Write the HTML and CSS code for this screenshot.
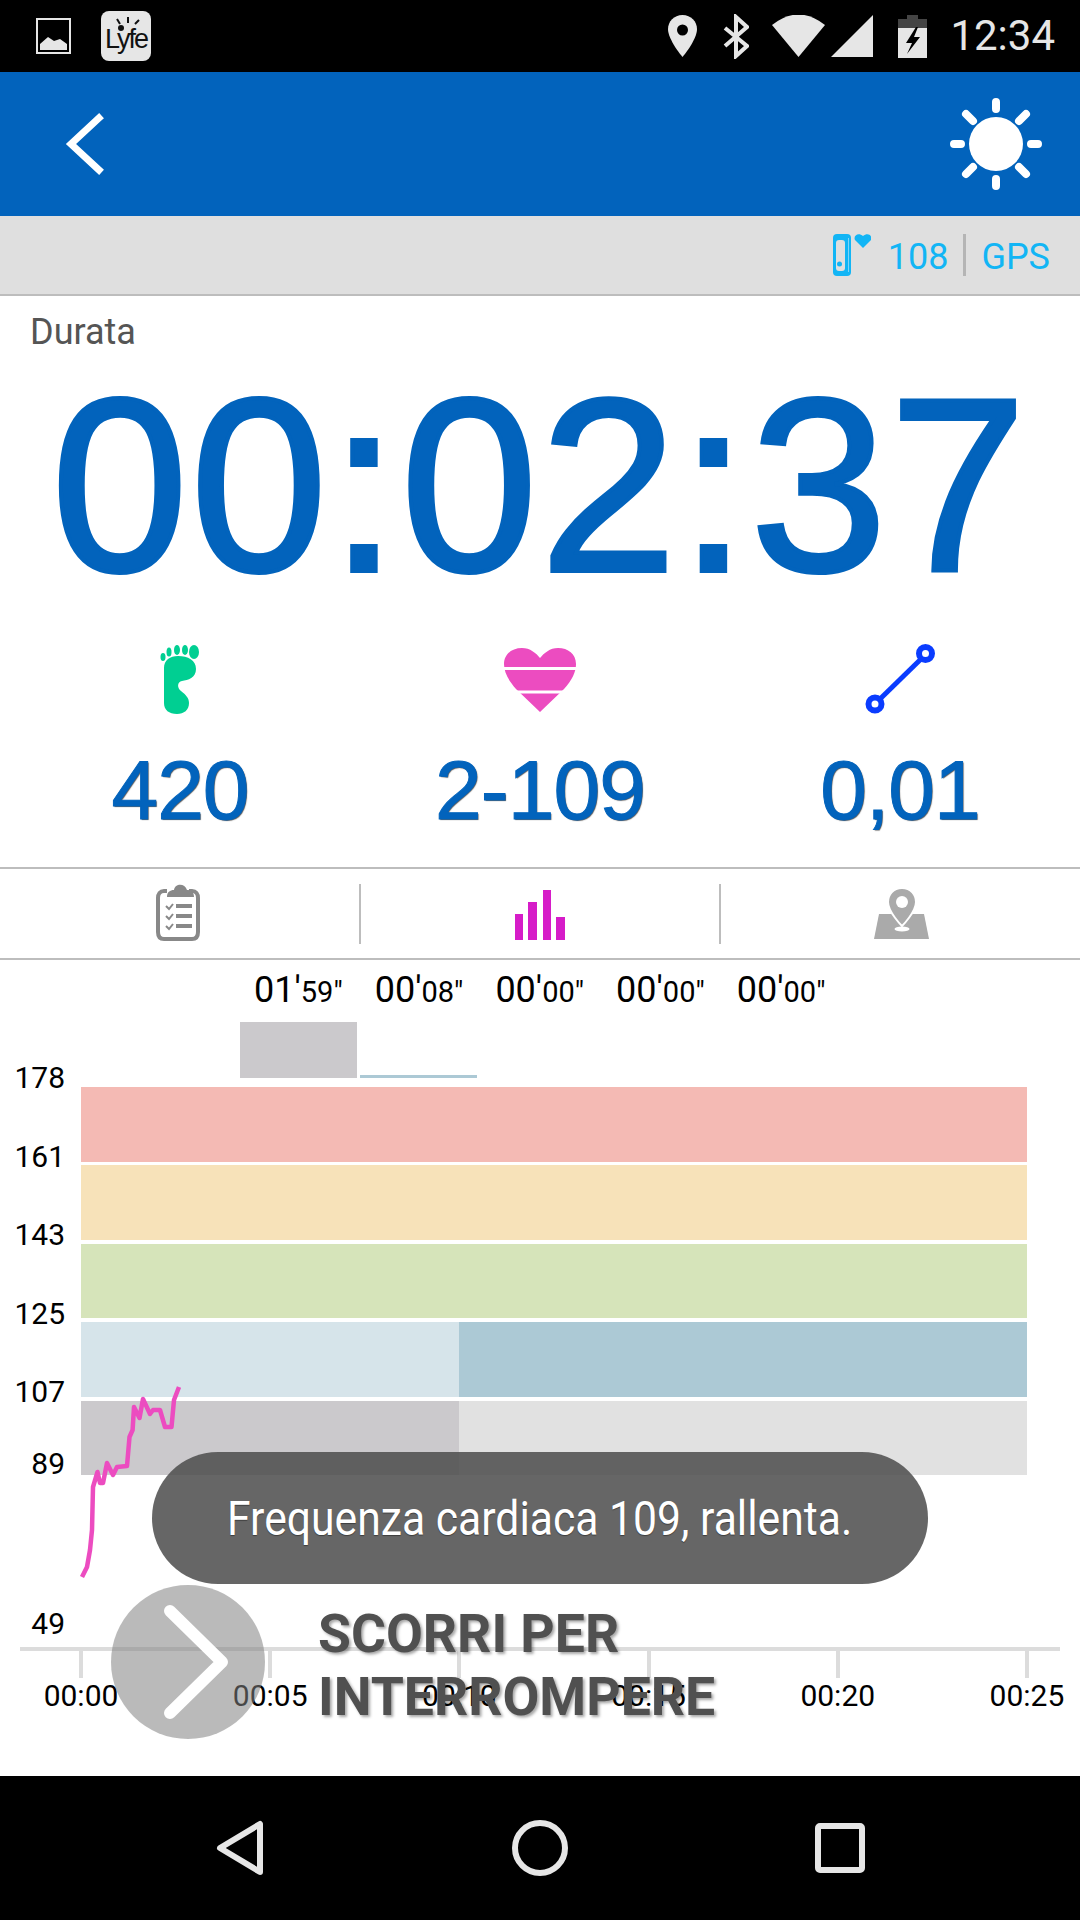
FILE: index.html
```html
<!DOCTYPE html>
<html>
<head>
    <title>Durata</title>
    <link rel="stylesheet" href="styles.css">
</head>
<body>
    <div class="status-bar">
        <svg class="ic-image" viewBox="36 18 35 36"><rect x="37" y="19" width="33" height="34" fill="none" stroke="#e6e6e6" stroke-width="2"/><path d="M40 50V44L48 37L54 41L60 39L67 44V50Z" fill="#e6e6e6"/></svg>
        <div class="life-logo">
            <svg class="life-rays" viewBox="0 0 50 20"><path d="M27 2V8M16 4L19 9M38 5L34 9" stroke="#111" stroke-width="2"/><circle cx="20" cy="13" r="3" fill="#111"/></svg>
            Lyfe
        </div>
        <div class="status-spacer"></div>
        <svg class="ic-pin" viewBox="669 15 29 42"><path d="M683.500 15C675 15 669 21.500 669 29C669 40 683.500 57 683.500 57C683.500 57 698 40 698 29C698 21.500 692 15 683.500 15Z" fill="#e6e6e6"/><circle cx="683.500" cy="30" r="5.500" fill="#000"/></svg>
        <svg class="ic-bt" viewBox="724 14 26 45"><path d="M726 28L748 46L737 56V17L748 27L726 46" fill="none" stroke="#e6e6e6" stroke-width="4"/></svg>
        <svg class="ic-wifi" viewBox="773 14 53 42"><path d="M773 24Q799.500 3 826 24L799.500 56Z" fill="#e6e6e6"/></svg>
        <svg class="ic-signal" viewBox="832 15 42 42"><path d="M832 57L874 15V57Z" fill="#e6e6e6"/></svg>
        <svg class="ic-battery" viewBox="899 14 29 43"><path d="M908 14H919V18H928V27H899V18H908Z" fill="#444"/><path d="M899 27H928V57H899Z" fill="#e6e6e6"/><path d="M917 26L907 42H913L908 53L921 36H915L919 26Z" fill="#000"/></svg>
        <span class="clock">12:34</span>
    </div>

    <div class="app-bar">
        <svg class="ic-back" viewBox="60 108 50 72"><path d="M99 118L71 144L99 170" fill="none" stroke="#fff" stroke-width="7" stroke-linecap="square"/></svg>
        <svg class="ic-sun" viewBox="948 96 96 96">
            <circle cx="996" cy="144" r="27" fill="#fff"/>
            <path d="M996 102V109M996 179V186M954 144H961M1031 144H1038M966 114L973 121M1026 114L1019 121M966 174L973 167M1026 174L1019 167" stroke="#fff" stroke-width="8" stroke-linecap="round"/>
        </svg>
    </div>

    <div class="sensor-bar">
        <svg class="ic-device" viewBox="835 234 38 42">
            <rect x="835" y="234" width="18" height="42" rx="4" fill="#12b5f5"/>
            <rect x="838" y="240" width="9" height="31" rx="3" fill="#dfdfdf"/>
            <rect x="850" y="238" width="1" height="34" fill="#7fd4f7"/>
            <circle cx="841.500" cy="264" r="2.500" fill="#12b5f5"/>
            <path d="M865 248L857 240C855 236 860 232 865 236C870 232 875 236 873 240Z" fill="#12b5f5"/>
        </svg>
        <span class="sensor-text">108</span>
        <span class="sensor-sep"></span>
        <span class="sensor-text">GPS</span>
    </div>

    <div class="duration-label">Durata</div>
    <div class="timer">00:02:37</div>

    <div class="stats">
        <div class="stat">
            <svg class="stat-icon" viewBox="150 644 60 71">
                <path d="M164 668C164 660 170 656 178 656C188 656 196 660 196 669C196 678 188 680 182 681C177 682 177 688 181 691C186 695 189 698 189 703C189 710 184 714 177 714C169 714 164 710 164 703Z" fill="#00cf92"/>
                <ellipse cx="163" cy="657" rx="2.500" ry="4" fill="#00cf92"/>
                <ellipse cx="169" cy="652" rx="2.500" ry="4.500" fill="#00cf92"/>
                <ellipse cx="177" cy="650" rx="3" ry="5" fill="#00cf92"/>
                <ellipse cx="185" cy="650" rx="3" ry="5" fill="#00cf92"/>
                <ellipse cx="194" cy="652" rx="5" ry="7" fill="#00cf92"/>
            </svg>
            <div class="stat-value">420</div>
        </div>
        <div class="stat">
            <svg class="stat-icon" viewBox="510 644 60 71">
                <path d="M540 712L516 689C508 680 504 672 504 664C504 654 512 648 522 648C530 648 536 653 540 658C544 653 550 648 558 648C568 648 576 654 576 664C576 672 572 680 564 689Z" fill="#ec4cc0"/>
                <path d="M500 668.500H580M500 692H580" stroke="#fff" stroke-width="3"/>
            </svg>
            <div class="stat-value">2-109</div>
        </div>
        <div class="stat">
            <svg class="stat-icon" viewBox="870 644 60 71">
                <path d="M880 699L921 659" stroke="#0a3cff" stroke-width="5"/>
                <circle cx="925.500" cy="653.500" r="6.500" fill="#fff" stroke="#0a3cff" stroke-width="6"/>
                <circle cx="875" cy="704" r="6.500" fill="#fff" stroke="#0a3cff" stroke-width="6"/>
            </svg>
            <div class="stat-value">0,01</div>
        </div>
    </div>

    <div class="tabs">
        <div class="tab">
            <svg class="tab-icon" viewBox="150 884 60 60">
                <path d="M168 891H165C161 891 159 894 159 898V932C159 937 161 939 165 939H193C197 939 199 937 199 932V898C199 894 197 891 193 891H190" fill="none" stroke="#888" stroke-width="4"/>
                <path d="M168 897C168 892 171 890 175 890C176 883 186 883 188 890C192 890 195 892 195 897Z" fill="#888"/>
                <path d="M167 906L170 909L174 904M167 916L170 919L174 914M167 926L170 929L174 924" fill="none" stroke="#888" stroke-width="2"/>
                <path d="M177 906H193M177 916H193M177 926H193" stroke="#888" stroke-width="4"/>
            </svg>
        </div>
        <div class="tab">
            <svg class="tab-icon" viewBox="510 884 60 60">
                <path d="M515 914H523V940H515ZM528 902H537V940H528ZM543 890H551V940H543ZM556 917H565V940H556Z" fill="#d61cc8"/>
            </svg>
        </div>
        <div class="tab">
            <svg class="tab-icon" viewBox="870 884 60 60">
                <path d="M878 914H923L928 939H873Z" fill="#aaa"/>
                <path d="M901 888C892 888 887 895 887 902C887 912 901 926 901 926C901 926 915 912 915 902C915 895 910 888 901 888Z" fill="#aaa" stroke="#fff" stroke-width="2"/>
                <circle cx="901" cy="902" r="6" fill="#fff"/>
                <ellipse cx="901" cy="929" rx="7.500" ry="2.500" fill="#fff"/>
            </svg>
        </div>
    </div>

    <div class="chart">
        <div class="zone-times">
            <div class="zone-time">01'<small>59"</small></div>
            <div class="zone-time">00'<small>08"</small></div>
            <div class="zone-time">00'<small>00"</small></div>
            <div class="zone-time">00'<small>00"</small></div>
            <div class="zone-time">00'<small>00"</small></div>
        </div>
        <div class="plot">
            <div class="y-labels">
                <div class="y-label">178</div>
                <div class="y-label">161</div>
                <div class="y-label">143</div>
                <div class="y-label">125</div>
                <div class="y-label y-label-short">107</div>
                <div class="y-label y-label-short">89</div>
                <div class="y-label y-label-tall">49</div>
            </div>
            <div class="plot-main">
                <div class="mini-bars">
                    <div class="mini-bar mini-bar-grey"></div>
                    <div class="mini-bar mini-bar-blue"></div>
                </div>
                <div class="zones">
                    <div class="zone zone-red"></div>
                    <div class="zone zone-orange"></div>
                    <div class="zone zone-green"></div>
                    <div class="zone zone-blue"><div class="zone-done zone-blue-done"></div></div>
                    <div class="zone zone-grey"><div class="zone-done zone-grey-done"></div></div>
                </div>
            </div>
        </div>
        <div class="axis-line"></div>
        <div class="ticks">
            <div class="tick"><i></i><span>00:00</span></div>
            <div class="tick"><i></i><span>00:05</span></div>
            <div class="tick"><i></i><span>00:10</span></div>
            <div class="tick"><i></i><span>00:15</span></div>
            <div class="tick"><i></i><span>00:20</span></div>
            <div class="tick"><i></i><span>00:25</span></div>
        </div>

        <svg class="hr-line" viewBox="0 960 1080 816">
            <polyline points="82,1577 87,1567 90,1550 92,1530 93,1487 97.500,1472 100,1483 103,1483 107,1463 113,1475 117,1467 127,1466 129.500,1437 132.600,1430 134,1407 139.500,1418 143,1399 150,1414 153,1410 160,1410 165,1427 171.500,1427 174,1400 179,1387" fill="none" stroke="#ec4cc0" stroke-width="4.500" stroke-linejoin="round"/>
        </svg>
        <div class="toast"><span>Frequenza cardiaca 109, rallenta.</span></div>
        <div class="slider">
            <svg class="slider-knob" viewBox="111 1585 154 154">
                <circle cx="188" cy="1662" r="77" fill="rgba(130,130,130,0.55)"/>
                <path d="M170 1611L222 1662L170 1713" fill="none" stroke="#fff" stroke-width="12" stroke-linecap="round" stroke-linejoin="round"/>
            </svg>
            <div class="slider-text">SCORRI PER<br>INTERROMPERE</div>
        </div>
    </div>

    <div class="nav-bar">
        <div class="nav-item"><svg width="52" height="58" viewBox="215 1819 52 58"><path d="M221 1848L261 1824V1872Z" fill="none" stroke="#e6e6e6" stroke-width="6" stroke-linejoin="round"/></svg></div>
        <div class="nav-item"><svg width="56" height="56" viewBox="512 1820 56 56"><circle cx="540" cy="1848" r="25" fill="none" stroke="#e6e6e6" stroke-width="6"/></svg></div>
        <div class="nav-item"><svg width="50" height="50" viewBox="815 1823 50 50"><rect x="818" y="1826" width="44" height="44" rx="2" fill="none" stroke="#e6e6e6" stroke-width="6"/></svg></div>
    </div>
</body>
</html>
```

FILE: styles.css
```css
* {
    box-sizing: border-box;
}
body {
    margin: 0;
    width: 1080px;
    height: 1920px;
    overflow: hidden;
    background: white;
    font-family: Roboto, sans-serif;
}
svg {
    display: block;
    flex: none;
}

/* status bar */
.status-bar {
    height: 72px;
    background: #000;
    display: flex;
    align-items: center;
    padding: 0 25px 0 36px;
}
.status-spacer {
    flex: 1;
}
.ic-image {
    width: 35px;
    height: 36px;
    margin-right: 30px;
}
.life-logo {
    position: relative;
    width: 50px;
    height: 50px;
    padding-top: 13px;
    background: #e6e6e6;
    border-radius: 8px;
    color: #111;
    font-family: "Liberation Sans", sans-serif;
    font-size: 27px;
    line-height: 30px;
    letter-spacing: -2px;
    text-align: center;
}
.life-rays {
    position: absolute;
    left: 0;
    top: 4px;
    width: 50px;
    height: 20px;
}
.ic-pin {
    width: 29px;
    height: 42px;
    margin-right: 26px;
}
.ic-bt {
    width: 26px;
    height: 45px;
    margin-right: 23px;
}
.ic-wifi {
    width: 53px;
    height: 42px;
    margin-right: 6px;
}
.ic-signal {
    width: 42px;
    height: 42px;
    margin-right: 25px;
}
.ic-battery {
    width: 29px;
    height: 43px;
    margin-right: 23px;
}
.clock {
    color: #e6e6e6;
    font-size: 42px;
    line-height: 74px;
}

/* app bar */
.app-bar {
    height: 144px;
    background: #0263bc;
    display: flex;
    align-items: center;
    justify-content: space-between;
    padding: 0 36px 0 60px;
}
.ic-back {
    width: 50px;
    height: 72px;
}
.ic-sun {
    width: 96px;
    height: 96px;
}
.sensor-bar {
    height: 80px;
    background: #dfdfdf;
    border-bottom: 2px solid #bdbdbd;
    display: flex;
    align-items: center;
    justify-content: flex-end;
    padding-right: 30px;
}
.ic-device {
    width: 38px;
    height: 42px;
    margin-right: 17px;
}
.sensor-text {
    margin-top: 4px;
    color: #12b5f5;
    font-size: 36px;
}
.sensor-sep {
    width: 3px;
    height: 42px;
    margin: 0 15px;
    background: #b5b5b5;
}

/* duration */
.duration-label {
    height: 72px;
    padding: 18px 0 0 30px;
    color: #555;
    font-size: 36px;
    line-height: 36px;
}
.timer {
    height: 276px;
    color: #0263bc;
    font-family: "Liberation Sans", sans-serif;
    font-size: 246px;
    line-height: 236px;
    letter-spacing: 2.500px;
    text-align: center;
    white-space: nowrap;
    -webkit-text-stroke: 4px #0263bc;
}

/* stats */
.stats {
    display: flex;
    height: 223px;
}
.stat {
    flex: 1;
    display: flex;
    flex-direction: column;
    align-items: center;
}
.stat-icon {
    width: 60px;
    height: 71px;
    overflow: visible;
}
.stat-value {
    margin-top: 33px;
    color: #0263bc;
    font-family: "Liberation Sans", sans-serif;
    font-size: 84px;
    line-height: 84px;
    letter-spacing: -1px;
    -webkit-text-stroke: 1px #0263bc;
    text-shadow: 1px 1px 1px #555;
}

/* tabs */
.tabs {
    display: flex;
    height: 93px;
    padding: 15px 0 14px;
    border-top: 2px solid #bdbdbd;
    border-bottom: 2px solid #bdbdbd;
}
.tab {
    flex: 1;
    display: flex;
    align-items: center;
    justify-content: center;
    border-right: 2px solid #bdbdbd;
}
.tab:last-child {
    border-right: none;
}
.tab-icon {
    width: 60px;
    height: 60px;
}

/* chart */
.chart {
    position: relative;
    height: 816px;
}
.zone-times {
    display: grid;
    grid-template-columns: repeat(5, 120.700px);
    height: 62px;
    padding: 8px 0 0 238px;
}
.zone-time {
    color: #000;
    font-size: 36px;
    line-height: 44px;
    text-align: center;
    white-space: nowrap;
}
.zone-time small {
    font-size: 29px;
}
.plot {
    display: flex;
    height: 625px;
}
.y-labels {
    width: 65px;
    padding-top: 38px;
}
.y-label {
    height: 78.500px;
    color: #000;
    font-size: 30px;
    line-height: 36px;
    text-align: right;
}
.y-label-short {
    height: 72px;
}
.y-label-tall {
    margin-top: 88px;
}
.plot-main {
    width: 946px;
    margin-left: 16px;
}
.mini-bars {
    display: flex;
    align-items: flex-end;
    gap: 3px;
    height: 56px;
    margin: 0 0 9px 159px;
}
.mini-bar {
    width: 117px;
}
.mini-bar-grey {
    height: 56px;
    background: #cbc9cc;
}
.mini-bar-blue {
    height: 3px;
    background: #acc9d5;
}
.zones {
    display: flex;
    flex-direction: column;
    gap: 3.875px;
}
.zone {
    height: 74.500px;
}
.zone-red {
    background: #f4bab4;
}
.zone-orange {
    background: #f7e2b9;
}
.zone-green {
    background: #d6e4ba;
}
.zone-blue {
    background: #acc9d5;
}
.zone-grey {
    background: #e1e1e1;
}
.zone-done {
    width: 378px;
    height: 100%;
}
.zone-blue-done {
    background: #d6e4ea;
}
.zone-grey-done {
    background: #cbc9cc;
}
.axis-line {
    width: 1040px;
    height: 4px;
    margin-left: 20px;
    background: #dcdcdc;
}
.ticks {
    display: flex;
    justify-content: space-between;
    width: 950px;
    margin-left: 79px;
}
.tick {
    width: 4px;
    display: flex;
    flex-direction: column;
    align-items: center;
}
.tick i {
    display: block;
    flex: none;
    width: 4px;
    height: 27px;
    background: #dcdcdc;
}
.tick span {
    color: #000;
    font-size: 30px;
    line-height: 36px;
    white-space: nowrap;
}
.hr-line {
    position: absolute;
    left: 0;
    top: 0;
    width: 1080px;
    height: 816px;
}
.toast {
    position: absolute;
    left: 152px;
    top: 492px;
    width: 776px;
    height: 132px;
    border-radius: 66px;
    background: rgba(78,78,78,0.865);
    display: flex;
    align-items: center;
    justify-content: center;
}
.toast span {
    display: inline-block;
    color: white;
    font-size: 48px;
    white-space: nowrap;
    transform: scaleX(0.889);
    text-shadow: 0 1px 1px rgba(0,0,0,0.4);
}
.slider {
    position: absolute;
    left: 111px;
    top: 625px;
    display: flex;
    align-items: center;
}
.slider-knob {
    width: 154px;
    height: 154px;
}
.slider-text {
    margin-left: 53px;
    padding-top: 5px;
    color: #505050;
    font-size: 53.500px;
    font-weight: 700;
    line-height: 63px;
    text-shadow: 2px 2px 3px rgba(0,0,0,0.35);
}

/* nav bar */
.nav-bar {
    height: 144px;
    background: #000;
    display: flex;
    padding: 0 90px;
}
.nav-item {
    flex: 1;
    display: flex;
    align-items: center;
    justify-content: center;
}
```
